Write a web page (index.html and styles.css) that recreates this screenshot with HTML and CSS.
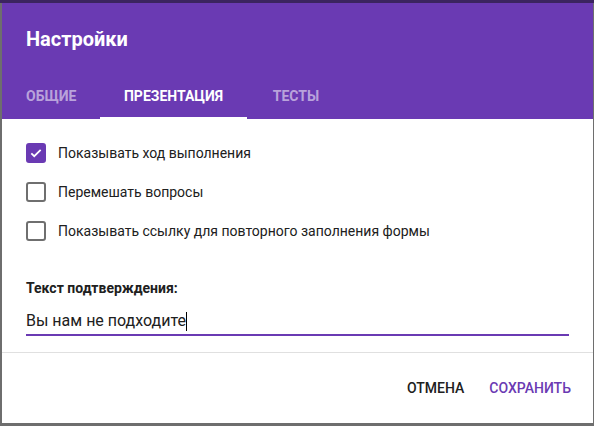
FILE: index.html
```html
<!DOCTYPE html>
<html lang="ru">
<head>
<meta charset="utf-8">
<link rel="stylesheet" href="styles.css">
</head>
<body>
<div class="backdrop">
  <div class="dialog">
    <div class="header">
      <div class="title">Настройки</div>
      <div class="tabs">
        <div class="tab tab-general">Общие</div>
        <div class="tab tab-active">Презентация</div>
        <div class="tab tab-tests">Тесты</div>
      </div>
    </div>
    <div class="body">
      <label class="check">
        <span class="box box-on">
          <svg width="14" height="14" viewBox="0 0 24 24"><path d="M4 12.5l5 5L20 6.5" fill="none" stroke="#fff" stroke-width="3"/></svg>
        </span>
        <span class="check-label">Показывать ход выполнения</span>
      </label>
      <label class="check">
        <span class="box"></span>
        <span class="check-label">Перемешать вопросы</span>
      </label>
      <label class="check">
        <span class="box"></span>
        <span class="check-label">Показывать ссылку для повторного заполнения формы</span>
      </label>
      <div class="field-title">Текст подтверждения:</div>
      <div class="field">Вы нам не подходите<span class="caret"></span></div>
    </div>
    <div class="footer">
      <div class="btn btn-cancel">Отмена</div>
      <div class="btn btn-save">Сохранить</div>
    </div>
  </div>
</div>
</body>
</html>
```
FILE: styles.css
```css
html, body {
  margin: 0;
  padding: 0;
}
body {
  width: 594px;
  height: 426px;
  overflow: hidden;
  background: #6b6b6b;
  font-family: Roboto, "Noto Sans", sans-serif;
}
.backdrop {
  padding: 3px 1px 3px 2px;
  background: linear-gradient(#3b2460 0, #3b2460 3px, #6e6e6e 3px);
  height: 420px;
}
.dialog {
  background: #fff;
  height: 420px;
  display: flex;
  flex-direction: column;
}
.header {
  background: #6a3ab3;
  height: 116px;
  display: flex;
  flex-direction: column;
}
.title {
  color: #fff;
  font-size: 20px;
  font-weight: 700;
  padding: 24px 0 0 24px;
  height: 48px;
  line-height: 24px;
}
.tabs {
  display: flex;
  margin-top: auto;
}
.tab {
  font-size: 14px;
  font-weight: 700;
  text-transform: uppercase;
  color: rgba(255,255,255,0.55);
  height: 40px;
  line-height: 34px;
  box-sizing: border-box;
  text-align: center;
}
.tab-general {
  width: 98px;
  text-align: left;
  padding-left: 24px;
}
.tab-active {
  width: 147px;
  color: #fff;
  border-bottom: 2px solid #fff;
}
.tab-tests {
  width: 98px;
}
.body {
  padding: 24px 24px 0 24px;
  flex: 1;
}
.check {
  display: flex;
  align-items: center;
  height: 20px;
  margin-bottom: 19px;
}
.box {
  width: 16px;
  height: 16px;
  border: 2px solid #6f6f6f;
  border-radius: 3px;
  margin-right: 12px;
  display: flex;
  align-items: center;
  justify-content: center;
}
.box-on {
  background: #6a3ab3;
  border-color: #6a3ab3;
}
.check-label {
  font-size: 14px;
  color: #202020;
}
.field-title {
  margin-top: 39px;
  font-size: 14px;
  font-weight: 700;
  color: #202020;
}
.field {
  margin-top: 12px;
  font-size: 16px;
  color: #202020;
  height: 26px;
  line-height: 24px;
  border-bottom: 2px solid #6a3ab3;
  display: flex;
  align-items: center;
}
.caret {
  display: inline-block;
  width: 1px;
  height: 19px;
  background: #000;
}
.footer {
  border-top: 1px solid #e0e0e0;
  height: 70px;
  display: flex;
  justify-content: flex-end;
  align-items: center;
  padding-right: 22px;
  gap: 25px;
}
.btn {
  font-size: 14px;
  font-weight: 500;
  text-transform: uppercase;
}
.btn-cancel {
  color: #202020;
}
.btn-save {
  color: #6a3ab3;
}
```
